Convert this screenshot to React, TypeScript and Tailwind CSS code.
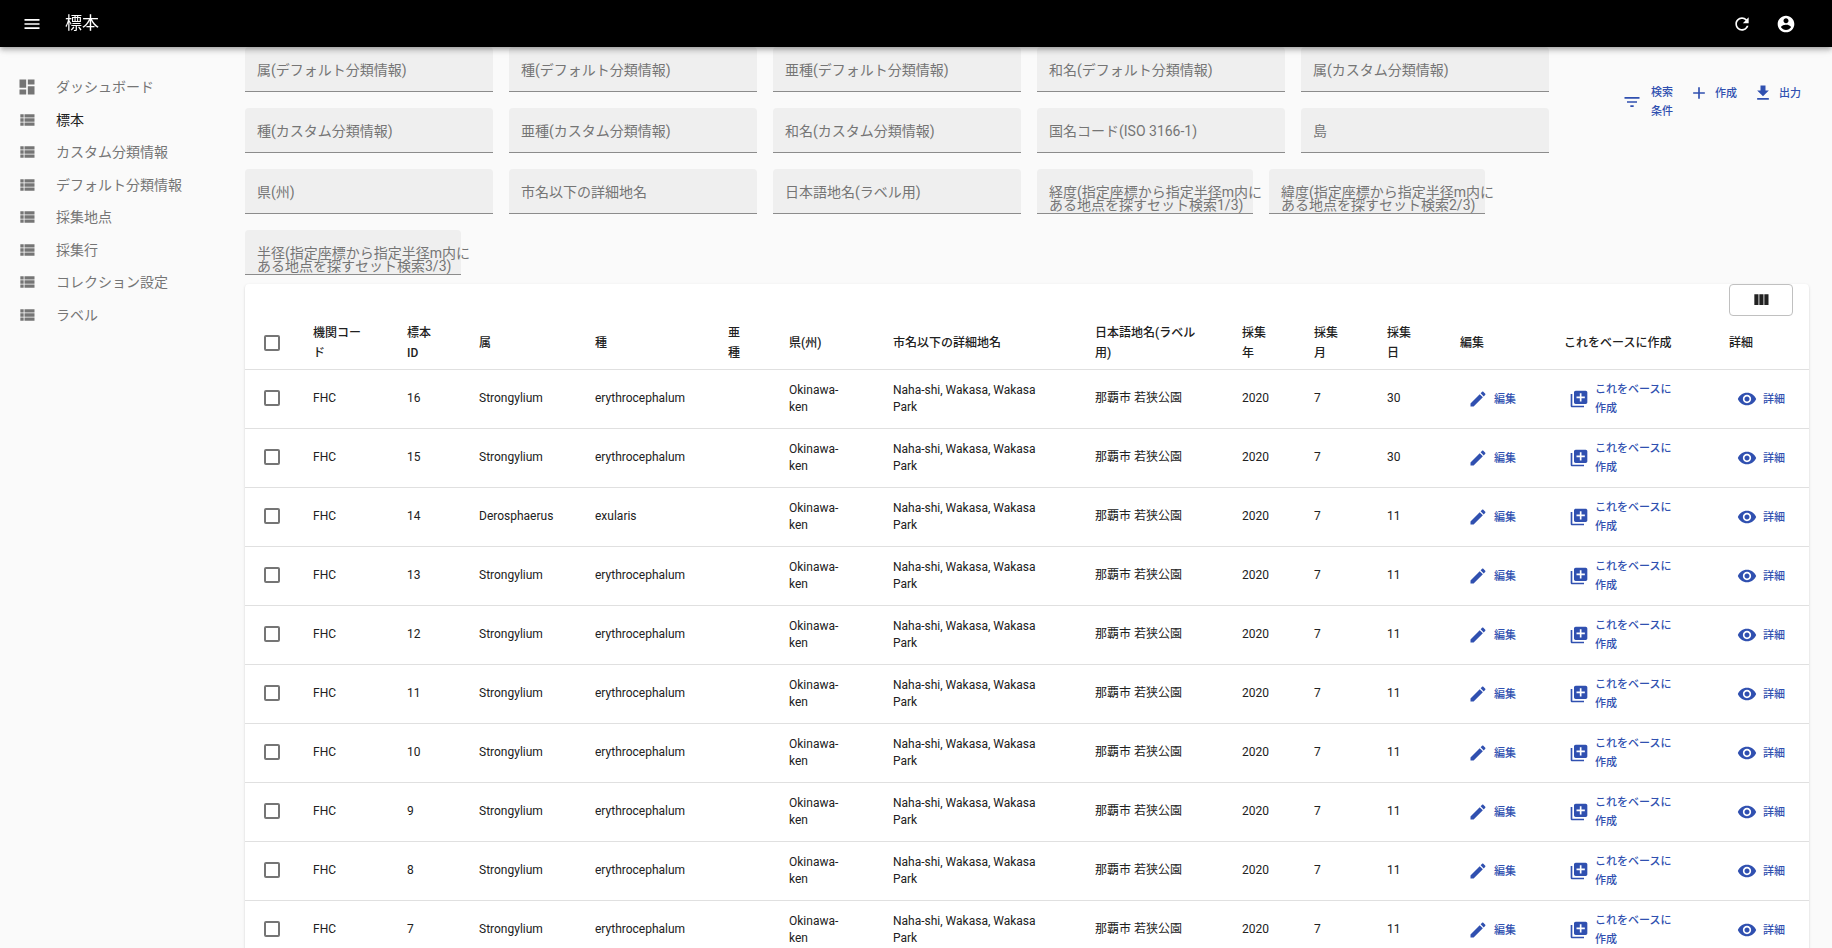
import React, { useState } from 'react';

const paths = {
  menu: 'M3 18h18v-2H3v2zm0-5h18v-2H3v2zm0-7v2h18V6H3z',
  refresh:
    'M17.65 6.35C16.2 4.9 14.21 4 12 4c-4.42 0-7.99 3.58-7.99 8s3.57 8 7.99 8c3.73 0 6.84-2.55 7.73-6h-2.08c-.82 2.33-3.04 4-5.65 4-3.31 0-6-2.69-6-6s2.69-6 6-6c1.66 0 3.14.69 4.22 1.78L13 11h7V4l-2.35 2.35z',
  account:
    'M12 2C6.48 2 2 6.48 2 12s4.48 10 10 10 10-4.48 10-10S17.52 2 12 2zm0 3c1.66 0 3 1.34 3 3s-1.34 3-3 3-3-1.34-3-3 1.34-3 3-3zm0 14.2c-2.5 0-4.71-1.28-6-3.22.03-1.99 4-3.08 6-3.08 1.99 0 5.97 1.09 6 3.08-1.29 1.94-3.5 3.22-6 3.22z',
  dashboard: 'M3 13h8V3H3v10zm0 8h8v-6H3v6zm10 0h8V11h-8v10zm0-18v6h8V3h-8z',
  list: 'M4 14h4v-4H4v4zm0 5h4v-4H4v4zM4 9h4V5H4v4zm5 5h12v-4H9v4zm0 5h12v-4H9v4zM9 5v4h12V5H9z',
  filter: 'M10 18h4v-2h-4v2zM3 6v2h18V6H3zm3 7h12v-2H6v2z',
  add: 'M19 13h-6v6h-2v-6H5v-2h6V5h2v6h6v2z',
  download: 'M19 9h-4V3H9v6H5l7 7 7-7zM5 18v2h14v-2H5z',
  columns: 'M10 18h5V5h-5v13zm-6 0h5V5H4v13zM16 5v13h5V5h-5z',
  edit: 'M3 17.25V21h3.75L17.81 9.94l-3.75-3.75L3 17.25zM20.71 7.04c.39-.39.39-1.02 0-1.41l-2.34-2.34c-.39-.39-1.02-.39-1.41 0l-1.83 1.83 3.75 3.75 1.83-1.83z',
  clone:
    'M4 6H2v14c0 1.1.9 2 2 2h14v-2H4V6zm16-4H8c-1.1 0-2 .9-2 2v12c0 1.1.9 2 2 2h12c1.1 0 2-.9 2-2V4c0-1.1-.9-2-2-2zm-1 9h-4v4h-2v-4H9V9h4V5h2v4h4v2z',
  eye: 'M12 4.5C7 4.5 2.73 7.61 1 12c1.73 4.39 6 7.5 11 7.5s9.27-3.11 11-7.5c-1.73-4.39-6-7.5-11-7.5zM12 17c-2.76 0-5-2.24-5-5s2.24-5 5-5 5 2.24 5 5-2.24 5-5 5zm0-8c-1.66 0-3 1.34-3 3s1.34 3 3 3 3-1.34 3-3-1.34-3-3-3z',
};

function Icon({ name }: { name: keyof typeof paths }) {
  return (
    <svg viewBox="0 0 24 24" className="size-5 shrink-0 fill-current" aria-hidden="true">
      <path d={paths[name]} />
    </svg>
  );
}

const menuItems: { label: string; icon: keyof typeof paths; active?: boolean }[] = [
  { label: 'ダッシュボード', icon: 'dashboard' },
  { label: '標本', icon: 'list', active: true },
  { label: 'カスタム分類情報', icon: 'list' },
  { label: 'デフォルト分類情報', icon: 'list' },
  { label: '採集地点', icon: 'list' },
  { label: '採集行', icon: 'list' },
  { label: 'コレクション設定', icon: 'list' },
  { label: 'ラベル', icon: 'list' },
];

const filters: string[][] = [
  ['属(デフォルト分類情報)'],
  ['種(デフォルト分類情報)'],
  ['亜種(デフォルト分類情報)'],
  ['和名(デフォルト分類情報)'],
  ['属(カスタム分類情報)'],
  ['種(カスタム分類情報)'],
  ['亜種(カスタム分類情報)'],
  ['和名(カスタム分類情報)'],
  ['国名コード(ISO 3166-1)'],
  ['島'],
  ['県(州)'],
  ['市名以下の詳細地名'],
  ['日本語地名(ラベル用)'],
  ['経度(指定座標から指定半径m内に', 'ある地点を探すセット検索1/3)'],
  ['緯度(指定座標から指定半径m内に', 'ある地点を探すセット検索2/3)'],
  ['半径(指定座標から指定半径m内に', 'ある地点を探すセット検索3/3)'],
];

const columns: { label: string; width: string }[] = [
  { label: '機関コード', width: 'w-[94px]' },
  { label: '標本ID', width: 'w-[72px]' },
  { label: '属', width: 'w-[116px]' },
  { label: '種', width: 'w-[133px]' },
  { label: '亜種', width: 'w-[61px]' },
  { label: '県(州)', width: 'w-[104px]' },
  { label: '市名以下の詳細地名', width: 'w-[202px]' },
  { label: '日本語地名(ラベル用)', width: 'w-[147px]' },
  { label: '採集年', width: 'w-[72px]' },
  { label: '採集月', width: 'w-[73px]' },
  { label: '採集日', width: 'w-[73px]' },
  { label: '編集', width: 'w-[104px]' },
  { label: 'これをベースに作成', width: 'w-[165px]' },
  { label: '詳細', width: 'w-[94px]' },
];

const rows = [16, 15, 14, 13, 12, 11, 10, 9, 8, 7].map((id) => ({
  id,
  genus: id === 14 ? 'Derosphaerus' : 'Strongylium',
  species: id === 14 ? 'exularis' : 'erythrocephalum',
  day: id >= 15 ? 30 : 11,
}));

function FilterField({ lines, id }: { lines: string[]; id: string }) {
  const wide = lines.length === 1;
  return (
    <div
      className={`relative h-[45px] rounded-t border-b border-[#8c8c8c] bg-[#efefef] ${wide ? 'w-[248px]' : 'w-[216px]'}`}
    >
      <input id={id} type="text" className="h-full w-full bg-transparent px-3 pt-4 text-sm outline-none" />
      <label
        htmlFor={id}
        className="pointer-events-none absolute top-[17px] left-3 text-sm leading-[13px] whitespace-nowrap text-[#757575]"
      >
        {lines.map((line) => (
          <span key={line} className="block">
            {line}
          </span>
        ))}
      </label>
    </div>
  );
}

function TextButton({
  icon,
  children,
  className = '',
}: {
  icon: keyof typeof paths;
  children: React.ReactNode;
  className?: string;
}) {
  return (
    <button
      type="button"
      className={`flex items-center gap-1.5 rounded text-left text-[11px] leading-[19px] font-medium text-[#3050b0] ${className}`}
    >
      <Icon name={icon} />
      <span>{children}</span>
    </button>
  );
}

function Check({ label, checked, onChange }: { label: string; checked: boolean; onChange: () => void }) {
  return (
    <input
      type="checkbox"
      aria-label={label}
      checked={checked}
      onChange={onChange}
      className="block size-4 appearance-none rounded-[2px] border-2 border-[#757575] checked:border-[#3050b0] checked:bg-[#3050b0]"
    />
  );
}

const cell = 'h-[59px] border-b border-[#e0e0e0] pl-3.5 pr-7';
const lineCell = 'h-[59px] border-b border-[#e0e0e0] pl-3.5 pr-7 pb-0.5';

export default function App() {
  const [selected, setSelected] = useState<number[]>([]);
  const all = selected.length === rows.length;
  const toggle = (id: number) =>
    setSelected((s) => (s.includes(id) ? s.filter((x) => x !== id) : [...s, id]));

  return (
    <div
      lang="ja"
      className="h-screen overflow-hidden bg-[#fafafa] font-['Roboto','Noto_Sans_CJK_JP',sans-serif] text-[#212121]"
    >
      <header className="fixed inset-x-0 top-0 z-10 flex h-[47px] items-center bg-black pr-6 pl-[22px] text-white shadow-[0_2px_4px_-1px_rgba(0,0,0,0.2),0_4px_5px_rgba(0,0,0,0.14),0_1px_10px_rgba(0,0,0,0.12)]">
        <button type="button" aria-label="メニュー">
          <Icon name="menu" />
        </button>
        <h1 className="ml-[23px] flex-1 text-[17px] leading-[27px]">標本</h1>
        <div className="flex items-center gap-6 pr-3">
          <button type="button" aria-label="更新">
            <Icon name="refresh" />
          </button>
          <button type="button" aria-label="プロフィール">
            <Icon name="account" />
          </button>
        </div>
      </header>

      <div className="flex pt-[47px]">
        <nav className="w-[245px] shrink-0 pt-6">
          <ul className="grid h-[260px] auto-rows-fr">
            {menuItems.map((item) => (
              <li key={item.label} className="flex">
                <a
                  href="#"
                  className={`flex flex-1 items-center gap-[19px] pl-[17px] text-sm ${item.active ? 'text-[#212121]' : 'text-[#757575]'}`}
                >
                  <span className="text-[#757575]">
                    <Icon name={item.icon} />
                  </span>
                  {item.label}
                </a>
              </li>
            ))}
          </ul>
        </nav>

        <main className="min-w-0 flex-1 pr-[23px]">
          <div className="flex items-start">
            <form className="flex flex-1 flex-wrap gap-4" onSubmit={(e) => e.preventDefault()}>
              {filters.map((lines, i) => (
                <FilterField key={lines.join('')} lines={lines} id={`filter-${i}`} />
              ))}
            </form>
            <div className="flex items-start gap-2 pt-9 pr-1">
              <TextButton icon="filter" className="px-1">
                <span className="block pl-[3px]">検索</span>
                <span className="block pl-[3px]">条件</span>
              </TextButton>
              <TextButton icon="add" className="px-1">
                作成
              </TextButton>
              <TextButton icon="download" className="px-1">
                出力
              </TextButton>
            </div>
          </div>

          <section className="mt-[9px] rounded bg-white shadow-[0_2px_1px_-1px_rgba(0,0,0,0.2),0_1px_1px_rgba(0,0,0,0.14),0_1px_3px_rgba(0,0,0,0.12)]">
            <div className="flex justify-end pr-4">
              <button
                type="button"
                aria-label="表示する列"
                className="flex h-8 w-16 items-center justify-center rounded border border-[#c0c0c0]"
              >
                <Icon name="columns" />
              </button>
            </div>
            <table className="w-full table-fixed border-separate border-spacing-0 text-xs leading-[17px]">
              <thead>
                <tr>
                  <th className="h-[54px] w-[54px] border-b border-[#e0e0e0] pl-[19px]">
                    <Check
                      label="すべて選択"
                      checked={all}
                      onChange={() => setSelected(all ? [] : rows.map((r) => r.id))}
                    />
                  </th>
                  {columns.map((c) => (
                    <th
                      key={c.label}
                      className={`h-[54px] border-b border-[#e0e0e0] pr-7 pl-3.5 text-left leading-5 font-medium ${c.width}`}
                    >
                      {c.label}
                    </th>
                  ))}
                </tr>
              </thead>
              <tbody>
                {rows.map((r) => (
                  <tr key={r.id}>
                    <td className="h-[59px] border-b border-[#e0e0e0] pb-0.5 pl-[19px]">
                      <Check label={`標本 ${r.id}`} checked={selected.includes(r.id)} onChange={() => toggle(r.id)} />
                    </td>
                    <td className={lineCell}>FHC</td>
                    <td className={lineCell}>{r.id}</td>
                    <td className={lineCell}>{r.genus}</td>
                    <td className={lineCell}>{r.species}</td>
                    <td className={lineCell}></td>
                    <td className={cell}>Okinawa-ken</td>
                    <td className={cell}>Naha-shi, Wakasa, Wakasa Park</td>
                    <td className={lineCell}>那覇市 若狭公園</td>
                    <td className={lineCell}>2020</td>
                    <td className={lineCell}>7</td>
                    <td className={lineCell}>{r.day}</td>
                    <td className={cell}>
                      <TextButton icon="edit" className="pl-2">
                        編集
                      </TextButton>
                    </td>
                    <td className={cell}>
                      <TextButton icon="clone" className="pr-2 pl-[5px]">
                        これをベースに作成
                      </TextButton>
                    </td>
                    <td className="h-[59px] border-b border-[#e0e0e0] pl-3.5">
                      <TextButton icon="eye" className="pl-2">
                        詳細
                      </TextButton>
                    </td>
                  </tr>
                ))}
              </tbody>
            </table>
          </section>
        </main>
      </div>
    </div>
  );
}
